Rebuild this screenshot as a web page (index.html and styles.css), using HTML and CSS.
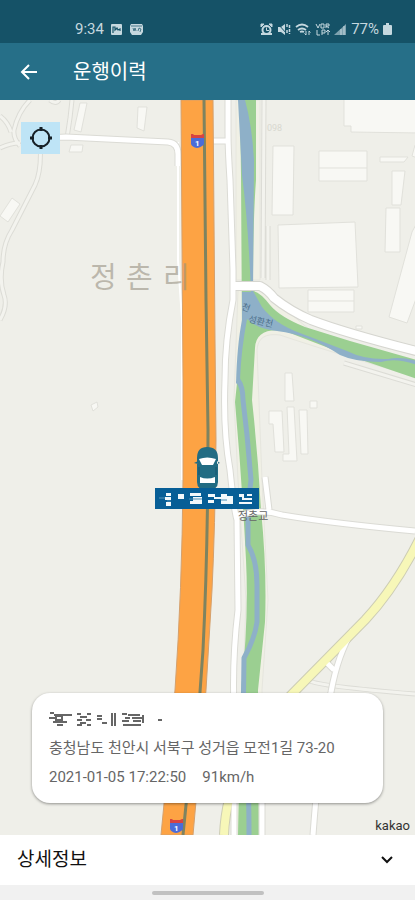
FILE: index.html
```html
<!DOCTYPE html>
<html lang="ko">
<head>
<meta charset="utf-8">
<meta name="viewport" content="width=device-width, initial-scale=1">
<title>운행이력</title>
<link rel="stylesheet" href="styles.css">
</head>
<body>
<div class="status">
  <div class="status-group">
    <span>9:34</span>
    <svg width="13" height="13" viewBox="0 0 13 13" aria-hidden="true"><rect x="1" y="1" width="11" height="11" rx="1" fill="currentColor"/><path d="M3 10V4h2v3l2-2 1 2 2-1v2" fill="none" stroke="#155267" stroke-width="1.2"/></svg>
    <svg width="15" height="13" viewBox="0 0 15 13" aria-hidden="true"><path d="M2 1h11l1 2v6l-2 3H3L1 9V3z" fill="currentColor"/><path d="M2 3h11M4 5l1 3 1-3 1 3M9 8l1-3 2 1-1 3" fill="none" stroke="#155267" stroke-width=".7"/></svg>
  </div>
  <div class="status-group status-right">
    <svg width="13" height="13" viewBox="0 0 13 13" aria-hidden="true"><path d="M1 1h3l-3 3zM12 1H9l3 3z" fill="currentColor" stroke="currentColor"/><path d="M1 11h11" stroke="currentColor" stroke-width="2"/><circle cx="6.500" cy="7" r="4" fill="none" stroke="currentColor" stroke-width="2"/><path d="M6.500 4.500v3H9" fill="none" stroke="currentColor"/></svg>
    <svg width="14" height="13" viewBox="0 0 14 13" aria-hidden="true"><path d="M1 4h3l4-3v11L4 9H1z" fill="currentColor"/><path d="M1 1l9 10" stroke="#155267"/><path d="M10 1v4M10 7v4M12.500 2v9" stroke="currentColor" stroke-width="1.500" stroke-dasharray="3 1"/></svg>
    <svg width="16" height="13" viewBox="0 0 16 13" aria-hidden="true"><path d="M1 4q6-5 12 0M3 7q4-3 8 0M5 9q2-1 4 0" fill="none" stroke="currentColor" stroke-width="1.800"/><path d="M11 8v4M9.500 10.500L11 12M14 12V8l1.500 1.500" fill="none" stroke="currentColor"/></svg>
    <svg width="15" height="13" viewBox="0 0 15 13" aria-hidden="true"><path d="M1 1l2 4 2-4M6 1v4h3V1H6M11 5V1h3v2h-3l3 2M2 7v5h3M7 12V7h3v3H7M13 7v5M11 9l2-2 2 2" fill="none" stroke="currentColor"/></svg>
    <svg width="13" height="13" viewBox="0 0 13 13" aria-hidden="true"><path d="M0 12L12 1v11z" fill="currentColor" opacity=".6"/><path d="M7 12V6M10 12V3" stroke="currentColor"/></svg>
    <span>77%</span>
    <svg width="9" height="13" viewBox="0 0 9 13" aria-hidden="true"><path d="M3 0h3v2h2a1 1 0 0 1 1 1v8a1 1 0 0 1-1 1H1a1 1 0 0 1-1-1V3a1 1 0 0 1 1-1h2z" fill="currentColor"/></svg>
  </div>
</div>
<header class="bar">
  <button class="back" type="button" aria-label="뒤로"><svg width="18" height="18" viewBox="0 0 18 18"><path d="M17 9H2M9 2L2 9l7 7" fill="none" stroke="currentColor" stroke-width="2"/></svg></button>
  <h1>운행이력</h1>
</header>
<main class="map">
  <svg class="canvas" viewBox="0 100 415 735" preserveAspectRatio="xMidYMid slice" role="img" aria-label="지도">
    <defs>
      <g id="lanes">
        <path d="M30 100Q18 112 14 130Q13 138 20 146M0 148Q10 143 20 143M40 143Q42 170 35 185L12 230Q3 244 3 262Q-1 280 4 295Q8 306 0 320M0 116Q8 122 11 132"/>
        <path d="M50 100Q56 105 59 100M72 100L70 118 67 138"/>
        <path d="M264 100L263 278M268 226V280M344 363L420 386M310 681Q318 686 415 694"/>
      </g>
      <g id="streets">
        <path d="M228 100V132Q228 150 230 180L233 270V300Q225 340 225 380Q223 430 230 470Q234 510 237 520L238 610Q232 660 234 710V835"/>
        <path d="M34 143Q48 137 66 137L168 142Q178 143 178 154V166M212 141H228"/>
        <path d="M265 477L269 510M236 516Q260 508 282 515Q330 523 415 531"/>
        <path d="M353 630Q338 654 331 692Q320 740 313 835M324 660L334 670"/>
        <path d="M262 835V800"/>
      </g>
      <path id="avenue" d="M233 286H260Q268 290 274 298Q290 311 311 320Q345 333 420 352"/>
      <path id="yellow" d="M420 538Q395 588 365 620L296 690Q227 757 224 835"/>
    </defs>
    <rect y="100" width="415" height="735" fill="#efefe9"/>
    <path class="edge" d="M178 142V260L182 320V480"/>
    <g class="building">
      <path d="M80 103L74 130 81 132 87 103zM138 107H147L144 131 137 128zM71 145H83L82 152H69zM12 198L20 204 8 222 0 216z"/>
      <path d="M344 95V126H351V132L420 133V95zM273 146H294L293 215H272zM319 151H367V181H319zM319 168H367M380 157H408L404 162H380zM392 171H405L401 205H392zM386 208H400V252H385z"/>
      <path d="M278 225L355 222 358 287 279 288zM308 290H354V312H308zM308 301H354M420 217L412 232 389 317 407 323 420 288z"/>
      <path d="M285 373H292L294 401H285zM310 401H317V408H310zM269 411H282L284 452H275L273 424H269zM287 407H294L297 461H283V454H289zM299 410H307L308 454H301zM91 405L97 402 98 407 93 411z"/>
      <path d="M415 145L412 156 420 159V145zM356 326H362V329H356z"/>
    </g>
    <path class="bank" d="M236 100H260V280H236zM238 290H262L310 330 420 364V378Q330 352 280 335Q258 332 257 350L262 480 268 600 262 690V835H235L243 690 246 600 238 480 234 400Z"/>
    <path class="green" d="M240 100H256V180Q253 220 253 291Q260 292 270 305Q280 317 305 327L350 341 420 361V380L350 356Q310 341 285 331Q256 327 255 348L252 400Q258 455 261 510Q267 570 265 622L258 690 259 835H238L241 690Q249 620 246 560Q242 480 235 402L242 335 241 175Z"/>
    <path class="water" d="M238 100H245Q252 125 254 160L253 291 262 307Q275 324 300 333L347 351Q365 360 388 359Q402 356 420 362V366Q397 357 381 362Q355 362 340 355Q310 335 277 331Q257 329 247 319Q241 351 240 380L236 384Q237 345 242 320V292H251Q248 220 242 175Z"/>
    <path class="stream" d="M238 380Q243 387 243 400L247 435 251 480 248 505V545Q257 560 257 585V622Q255 638 244 658L243 730Q249 760 249 835"/>
    <use href="#lanes" class="road lane-case"/><use href="#lanes" class="road lane-fill"/>
    <g class="road"><use href="#streets" class="street-case"/><use href="#avenue" class="avenue-case"/><use href="#yellow" class="yellow-case"/><use href="#streets" class="street-fill"/><use href="#avenue" class="avenue-fill"/><use href="#yellow" class="yellow-fill"/></g>
    <path class="highway" d="M181 100H213L215 340 216 440Q215 530 212 590L206 690 193 835H161L175 690Q182 590 183 480V380Z"/>
    <path class="track" d="M204 100L206 300 208 430Q208 550 203 650L198 720 186 805 183 835"/>
    <text class="village" x="90 117 126 153 163" y="288">정 촌 리</text>
    <text class="river-name" x="241" y="309" transform="rotate(22 241 309)">천</text>
    <text class="river-name" x="248" y="322" transform="rotate(12 248 322)">성환천</text>
    <text class="river-name dim" x="267" y="131">098</text>
    <text class="bridge" x="238" y="520">정촌교</text>
    <g id="shield"><path d="M191 135H204V144Q202 147 197 148Q192 147 191 144z" fill="#4b6cd8"/><path d="M191 134h2l1 1h7l2-1h1v4h-13z" fill="#d84341"/><text class="route" x="195" y="146">1</text></g>
    <use href="#shield" x="-21" y="685"/>
    <path d="M197 458Q197 447 207 447Q218 447 218 458V482Q218 490 207 490Q197 490 197 482zM194 463L198 461V464zM220 463L217 461V464z" fill="#226c83"/>
    <path d="M199 459Q207 456 216 459L213 465H202zM200 477Q207 480 215 477V483H200z" fill="#fff"/>
    <path d="M199 467V475M216 467V475" stroke="#16556c"/>
    <path d="M155 488H259V509H155z" fill="#075e96"/>
    <path d="M159 498H165" stroke="#5a95b8"/>
    <path d="M166 493H171V496H166zM165 497H171V500H165zM166 502H171V506H166zM178 494H184V499H178zM190 493H201V496H190zM193 497H202V504H190V501H193zM208 494H215V497H208zM208 500H214V503H208zM214 497H221V499H214zM221 494H227V496H233V504H221zM239 494H244V498H252V500H242V497H239zM247 494H252V496H247zM239 502H252V504H239z" fill="#f2f8fb"/>
    <path d="M189 499H202M221 500H227M167 501H171" stroke="#4c8eb5"/>
  </svg>
  <button class="locate" type="button" aria-label="현재 위치"><svg width="24" height="24" viewBox="0 0 24 24"><circle cx="12" cy="12" r="8.500" fill="none" stroke="currentColor" stroke-width="2"/><path d="M12 1v4M12 19v4M1 12h4M19 12h4" stroke="currentColor" stroke-width="3"/></svg></button>
  <section class="card">
    <svg class="redacted" width="116" height="16" viewBox="0 0 116 16" aria-hidden="true"><path d="M1 2h4M5 4h18M0 7h7M7 5h6v4H7zM4 11h14M8 14h6M28 3h4M38 3h4M31 6h7M28 9h5M37 9h5M31 12h6M28 14h5M38 14h4M48 5h5M48 8h5M53 12h5M63 2v13M66 2v13M73 3h5M79 4h12M76 7h5M83 7h10M73 10h7M84 10h8M94 4v8M74 14h18M109 9h4" fill="none" stroke="#666" stroke-width="2"/></svg>
    <p>충청남도 천안시 서북구 성거읍 모전1길 73-20</p>
    <p class="meta"><span>2021-01-05 17:22:50</span><span>91km/h</span></p>
  </section>
  <span class="brand">kakao</span>
</main>
<button class="details" type="button"><span>상세정보</span><svg width="14" height="10" viewBox="0 0 14 10" aria-hidden="true"><path d="M2 2l5 5 5-5" fill="none" stroke="currentColor" stroke-width="2"/></svg></button>
<div class="nav"><span class="handle"></span></div>
</body>
</html>
```
FILE: styles.css
```css
* { box-sizing: border-box; }
body {
  margin: 0;
  min-height: 100vh;
  display: flex;
  flex-direction: column;
  font-family: Roboto, "Noto Sans CJK KR", sans-serif;
  background: #efefe9;
}
button { border: 0; padding: 0; font: inherit; cursor: pointer; }
svg { display: block; }
.status {
  display: flex;
  justify-content: space-between;
  padding: 20px 23px 5px 75px;
  height: 43px;
  background: #155267;
  color: #c5d8df;
  font-size: 15px;
  line-height: 18px;
}
.status-group { display: flex; align-items: center; gap: 6px; }
.status-right { gap: 4px; }
.bar {
  display: flex;
  align-items: center;
  gap: 35px;
  height: 57px;
  padding: 0 20px;
  background: #266f88;
  color: #fff;
}
.bar h1 { margin: 0; font-size: 20px; line-height: 28px; font-weight: 400; }
.back { background: none; color: inherit; }
.map {
  position: relative;
  flex: 1;
  min-height: 400px;
  display: flex;
  flex-direction: column;
  justify-content: flex-end;
  padding: 0 32px 32px;
  overflow: hidden;
}
.canvas { position: absolute; inset: 0; width: 100%; height: 100%; }
.locate {
  position: absolute;
  top: 22px;
  left: 21px;
  display: grid;
  place-items: center;
  width: 39px;
  height: 32px;
  background: #bee4f6;
  color: #172026;
}
.card {
  position: relative;
  padding: 18px 17px 16px;
  border-radius: 18px;
  background: #fff;
  color: #666;
  font-size: 15px;
  line-height: 20px;
  box-shadow: 0 1px 3px rgba(0, 0, 0, .4);
}
.card p { margin: 11px 0 0; }
.card .meta { display: flex; gap: 16px; margin-top: 9px; }
.brand {
  position: absolute;
  right: 5px;
  bottom: 1px;
  font-size: 13px;
  line-height: 16px;
  color: #333;
}
.details {
  display: flex;
  align-items: center;
  justify-content: space-between;
  height: 50px;
  padding: 0 21px 0 17px;
  background: #fff;
  color: #111;
  font-size: 19px;
  line-height: 28px;
}
.nav { display: flex; justify-content: center; height: 15px; padding-top: 6px; background: #f1f1f1; }
.handle { width: 112px; height: 4px; border-radius: 2px; background: #c1c1c1; }

.road, .edge, .stream, .track { fill: none; stroke-linejoin: round; }
.building { fill: #f8f8f4; stroke: #e1e1db; }
.bank { fill: #f0f0e5; stroke: #e6e6de; }
.green { fill: #9bcf91; }
.water { fill: #8eb0c8; }
.stream { stroke: #8eb0c8; stroke-width: 5; }
.edge { stroke: #fff; stroke-width: 2; }
.lane-case { stroke: #dcdcd6; stroke-width: 5; }
.lane-fill { stroke: #f3f3ee; stroke-width: 3; }
.street-case { stroke: #dbdbd5; stroke-width: 7; }
.street-fill { stroke: #fff; stroke-width: 5; }
.avenue-case { stroke: #d6d6d0; stroke-width: 10; }
.avenue-fill { stroke: #fff; stroke-width: 8; }
.yellow-case { stroke: #cdcdb4; stroke-width: 10; }
.yellow-fill { stroke: #f7f7b8; stroke-width: 8; }
.highway { fill: #fda344; stroke: #d5a06c; }
.track { stroke: #7e8360; stroke-width: 3; }
.village { font-size: 29px; fill: #999283; fill-opacity: .6; }
.river-name { font-size: 9px; fill: #4e708c; }
.river-name.dim { fill: #d8d8d0; }
.bridge { font-size: 11px; fill: #666; }
.route { font-size: 8px; font-weight: 700; fill: #fff; }
```
